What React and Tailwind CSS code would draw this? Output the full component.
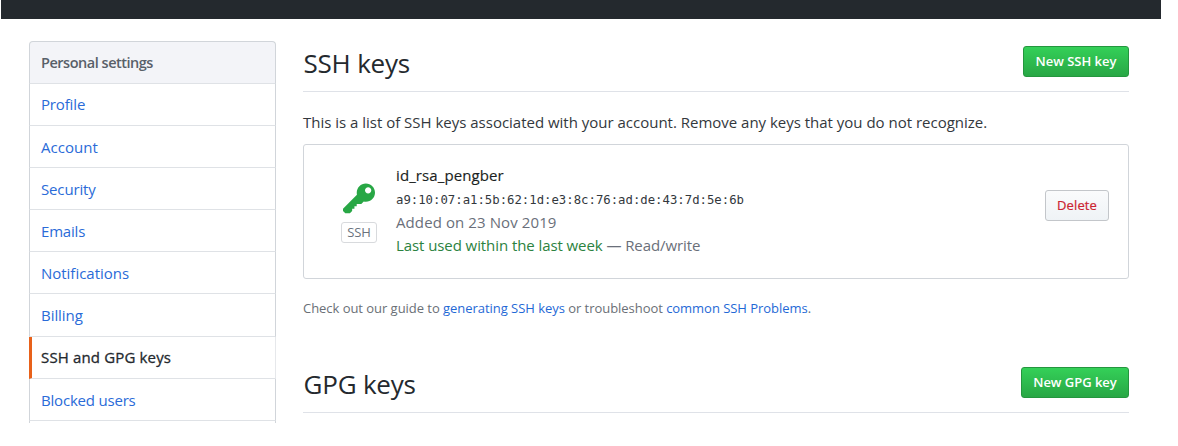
const menuItems = [
  { label: "Profile", track: "tracking-[-0.15px]" },
  { label: "Account", track: "tracking-[0.05px]" },
  { label: "Security", track: "tracking-[-0.15px]" },
  { label: "Emails", track: "tracking-[-0.2px]" },
  { label: "Notifications", track: "tracking-[-0.02px]" },
  { label: "Billing", track: "tracking-[-0.05px]" },
  { label: "SSH and GPG keys", track: "tracking-[0.15px]", selected: true },
  { label: "Blocked users", track: "tracking-[-0.2px]" },
];

function KeyIcon() {
  return (
    <svg viewBox="0 0 14 16" className="h-[37px] w-[32px] fill-[#28a745]" aria-hidden="true">
      <path
        fillRule="evenodd"
        d="M12.83 2.17C12.08 1.42 11.14 1.03 10 1c-1.13.03-2.08.42-2.83 1.17S6.04 3.86 6.01 5c0 .3.03.59.09.89L0 12v1l1 1h2l1-1v-1h1v-1h1v-1h2l1.09-1.11c.3.08.59.11.91.11 1.14-.03 2.08-.42 2.83-1.17S13.97 6.14 14 5c-.03-1.14-.42-2.08-1.17-2.83zM11 5.38c-.77 0-1.38-.61-1.38-1.38 0-.77.61-1.38 1.38-1.38.77 0 1.38.61 1.38 1.38 0 .77-.61 1.38-1.38 1.38z"
      />
    </svg>
  );
}

function SettingsMenu() {
  return (
    <nav className="mt-[41px] h-[382px] w-[247px] shrink-0 overflow-hidden text-[15px]">
      <h3 className="flex h-[42.5px] items-center rounded-t-[4px] border border-[#d1d5da] border-b-[#dfe2e6] bg-[#f3f4f8] pt-[2px] pl-[11px] text-[14.5px] font-semibold tracking-[-0.48px] text-[#586069]">
        Personal settings
      </h3>
      {menuItems.map(({ label, track, selected }) => (
        <a
          key={label}
          className={`flex h-[42.2px] items-center border-r border-b border-b-[#dfe2e6] pt-[1px] ${track} ${
            selected
              ? "border-l-[3px] border-r-[#e6e8eb] border-l-[#e8611a] pl-[9px] text-[#24292e] [-webkit-text-stroke:0.3px]"
              : "border-l border-r-[#d1d5da] border-l-[#d1d5da] pl-[11px] text-[#2a6bd8]"
          }`}
        >
          {label}
        </a>
      ))}
      <div className="h-[4px] border-x border-[#d1d5da]" />
    </nav>
  );
}

function SectionHead({ title, action, width }) {
  return (
    <div className="flex h-[51px] items-start justify-between border-b border-[#dfe2e8]">
      <h2 className="pt-[1px] pl-[0.5px] text-[26px] leading-[42px] tracking-[-0.2px] text-[#24292e]">{title}</h2>
      <button
        className={`mt-[5px] h-[31px] rounded-[3px] border border-[#24963e] bg-linear-to-b from-[#34d058] to-[#28a745] pt-px text-[13px] font-semibold tracking-[-0.02px] whitespace-nowrap text-white ${width}`}
      >
        {action}
      </button>
    </div>
  );
}

export default function App() {
  return (
    <div className="h-[446px] overflow-hidden bg-white font-['Open_Sans','Noto_Sans',sans-serif] whitespace-nowrap">
      <header className="ml-px h-[19px] w-[1160px] bg-[#24292e]" />
      <div className="-mt-[19px] flex items-start gap-[27px] pl-[29px]">
        <SettingsMenu />
        <main className="w-[826px] pt-[41px]">
          <SectionHead title="SSH keys" action="New SSH key" width="w-[106px]" />
          <p className="mt-[19px] h-[33px] text-[15px] leading-[22px] tracking-[-0.01px] text-[#33383d]">
            This is a list of SSH keys associated with your account. Remove any keys that you do not recognize.
          </p>
          <section className="flex h-[135px] items-start rounded-[3px] border border-[#d1d5da] pr-[19px]">
            <div className="ml-[36px] flex w-[38px] flex-col items-center pt-[36px]">
              <KeyIcon />
              <span className="mt-[4px] flex h-[21px] w-[36px] items-center justify-center rounded-[3px] border border-[#d8dadd] text-[13px] tracking-[-0.1px] text-[#6a737d]">
                SSH
              </span>
            </div>
            <div className="ml-[18px] grow pt-[19px] text-[15px] leading-[23px] text-[#6a6f7a]">
              <strong className="block h-[25px] font-normal tracking-[0.1px] text-[#1b1f23] [-webkit-text-stroke:0.15px]">
                id_rsa_pengber
              </strong>
              <code className="block h-[22px] font-['DejaVu_Sans_Mono',monospace] text-[12.3px] text-[#33383d]">
                a9:10:07:a1:5b:62:1d:e3:8c:76:ad:de:43:7d:5e:6b
              </code>
              <span className="block tracking-[0.1px]">Added on 23 Nov 2019</span>
              <span className="block tracking-[-0.08px]">
                <span className="text-[#2b8240]">Last used within the last week</span> — Read/write
              </span>
            </div>
            <button className="mt-[45px] h-[31px] w-[64px] rounded-[3px] border border-[#c3c6ca] bg-linear-to-b from-[#fafbfc] to-[#eff3f6] pt-px text-[13px] tracking-[0.1px] text-[#cb2431] [-webkit-text-stroke:0.2px]">
              Delete
            </button>
          </section>
          <p className="mt-[18px] h-[65px] text-[13px] leading-[22px] tracking-[-0.04px] text-[#6a6f76]">
            Check out our guide to <a className="text-[#1f69d6]">generating SSH keys</a> or troubleshoot{" "}
            <a className="text-[#1f69d6]">common SSH Problems</a>.
          </p>
          <SectionHead title="GPG keys" action="New GPG key" width="w-[108px]" />
        </main>
      </div>
    </div>
  );
}
